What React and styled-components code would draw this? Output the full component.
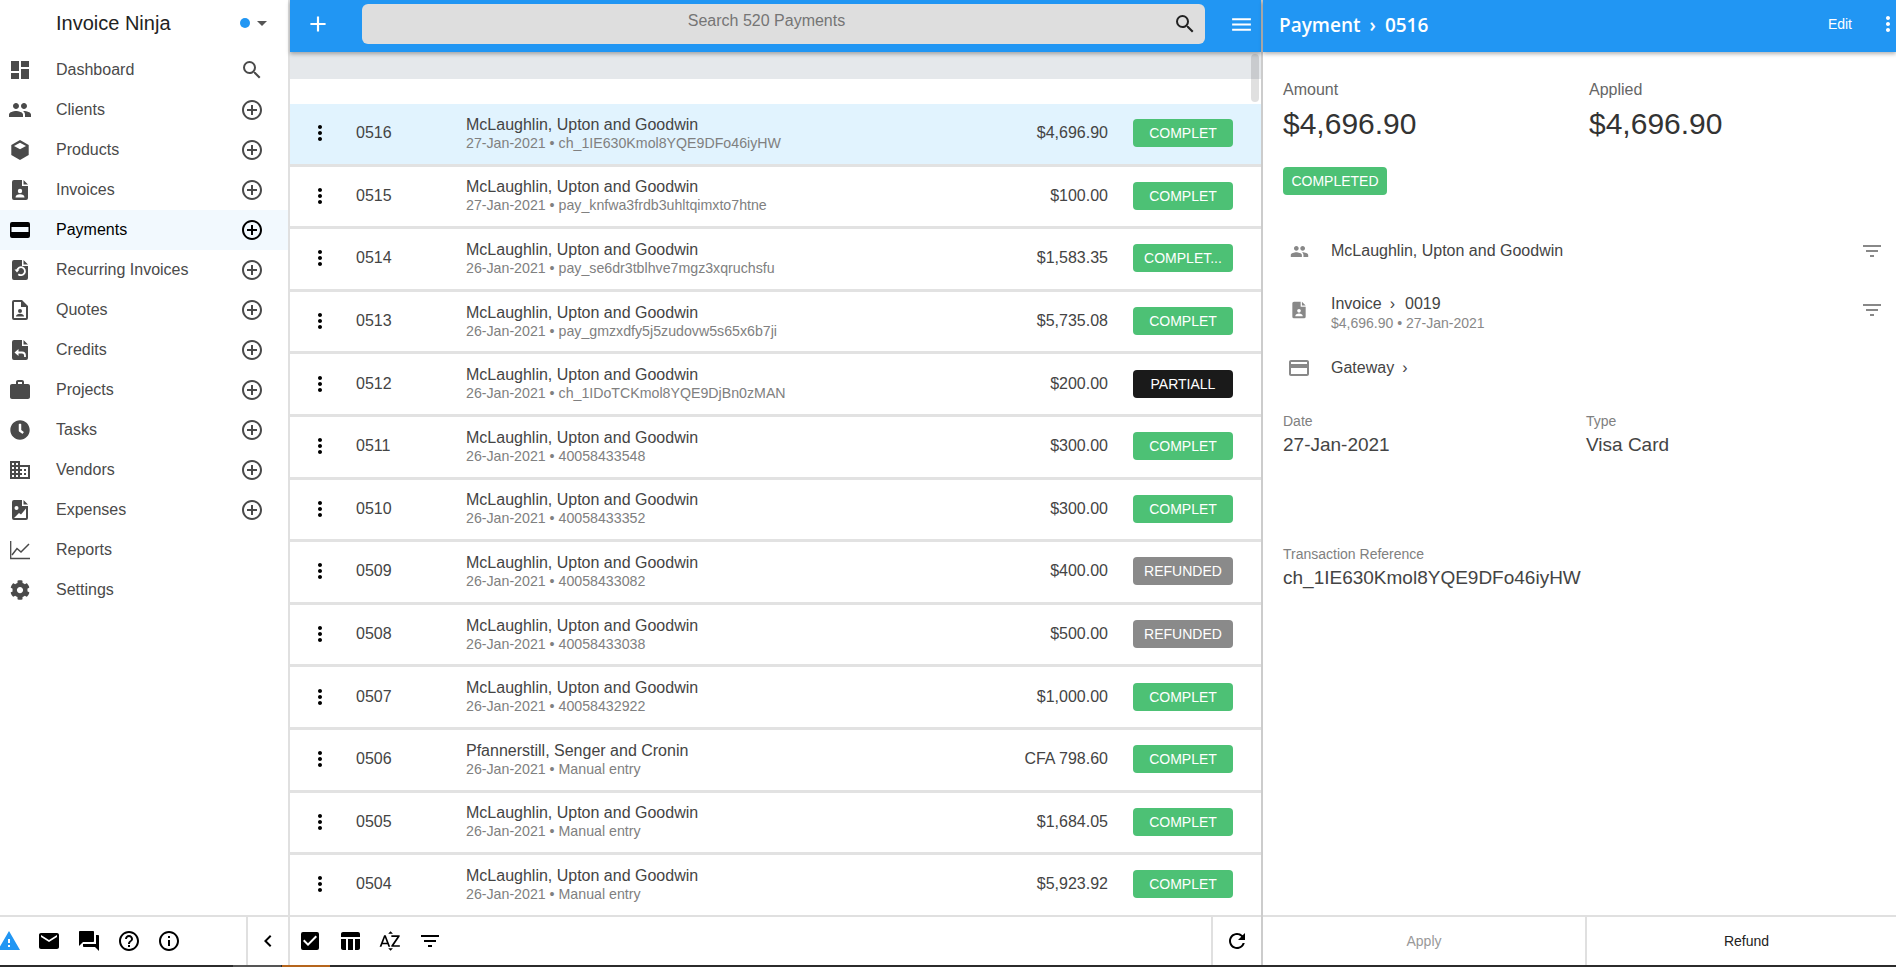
import React from "react";
import styled, { createGlobalStyle } from "styled-components";
import {
  MdDashboard, MdPeople, MdSearch, MdAddCircleOutline, MdCreditCard, MdWork, MdDomain,
  MdWarning, MdMail, MdForum, MdHelpOutline, MdInfoOutline, MdChevronLeft, MdCheckBox,
  MdTableChart, MdSortByAlpha, MdFilterList, MdRefresh, MdMoreVert, MdAdd, MdMenu,
  MdArrowDropDown,
} from "react-icons/md";
import { FaClock, FaCog } from "react-icons/fa";

const GlobalStyle = createGlobalStyle`
  html, body { margin: 0; padding: 0; height: 100%; overflow: hidden; background: #fff; }
  body { font-family: "Liberation Sans", Arial, sans-serif; }
  * { box-sizing: border-box; }
`;

// file shaped icons used by invoices, quotes, credits, expenses
const FileIcon = ({ children, outline, size = 24 }) => (
  <svg width={size} height={size} viewBox="0 0 24 24">
    <path
      fill="currentColor"
      fillRule="evenodd"
      d={outline
        ? "M6 2h8l6 6v12a2 2 0 0 1-2 2H6a2 2 0 0 1-2-2V4a2 2 0 0 1 2-2zm0 2v16h12V9h-5V4z"
        : "M6 2h8v6h6v12a2 2 0 0 1-2 2H6a2 2 0 0 1-2-2V4a2 2 0 0 1 2-2zm9.500 0L20 6.500h-4.500z"}
    />
    {children}
  </svg>
);

const InvoiceIcon = ({ size }) => (
  <FileIcon size={size}>
    <circle cx="12" cy="13" r="2.200" fill="#fff" />
    <path d="M7.500 19.500c0-2.200 2-3.300 4.500-3.300s4.500 1.100 4.500 3.300z" fill="#fff" />
  </FileIcon>
);
const RecurringIcon = () => (
  <FileIcon>
    <path d="M9 12.500a4 4 0 1 1 1.300 3.700" fill="none" stroke="#fff" strokeWidth="1.800" />
    <path d="M6.500 11.500h5l-2.500 3z" fill="#fff" />
  </FileIcon>
);
const QuoteIcon = () => (
  <FileIcon outline>
    <circle cx="12" cy="13" r="2" fill="currentColor" />
    <path d="M8 18.500c0-1.900 1.800-2.800 4-2.800s4 .9 4 2.800z" fill="currentColor" />
  </FileIcon>
);
const CreditIcon = () => (
  <FileIcon>
    <path d="M9 14.500h5a3 3 0 0 1 3 3v1.500" fill="none" stroke="#fff" strokeWidth="1.800" />
    <path d="M10.500 11v7l-4-3.500z" fill="#fff" />
  </FileIcon>
);
const ExpenseIcon = () => (
  <FileIcon>
    <circle cx="8.500" cy="10" r="2" fill="#fff" />
    <path d="M6 20l5-5 2 1.500 5-6V20z" fill="#fff" />
  </FileIcon>
);
const ProductIcon = () => (
  <svg width="24" height="24" viewBox="0 0 24 24">
    <path fill="currentColor" d="M12 2l8.700 5v10L12 22l-8.700-5V7z" />
    <path fill="#fff" d="M12 4.800L18 8l-6 3.300L6 8z" />
  </svg>
);
const CardIcon = () => (
  <svg width="24" height="24" viewBox="0 0 24 24">
    <path
      fill="currentColor"
      fillRule="evenodd"
      d="M4 4h16a2 2 0 0 1 2 2v12a2 2 0 0 1-2 2H4a2 2 0 0 1-2-2V6a2 2 0 0 1 2-2zM3.500 9v5h17V9z"
    />
  </svg>
);
const ReportIcon = () => (
  <svg width="24" height="24" viewBox="0 0 24 24">
    <path fill="none" stroke="currentColor" strokeWidth="1.300" d="M2.700 3v17.500H22" />
    <path fill="none" stroke="currentColor" strokeWidth="1.500" d="M4 17l5-6.500 4 3.500 8-8" />
  </svg>
);

const navItems = [
  { label: "Dashboard", Icon: MdDashboard, action: "search" },
  { label: "Clients", Icon: MdPeople, action: "add" },
  { label: "Products", Icon: ProductIcon, action: "add" },
  { label: "Invoices", Icon: InvoiceIcon, action: "add" },
  { label: "Payments", Icon: CardIcon, action: "add", active: true },
  { label: "Recurring Invoices", Icon: RecurringIcon, action: "add" },
  { label: "Quotes", Icon: QuoteIcon, action: "add" },
  { label: "Credits", Icon: CreditIcon, action: "add" },
  { label: "Projects", Icon: MdWork, action: "add" },
  { label: "Tasks", Icon: FaClock, small: true, action: "add" },
  { label: "Vendors", Icon: MdDomain, action: "add" },
  { label: "Expenses", Icon: ExpenseIcon, action: "add" },
  { label: "Reports", Icon: ReportIcon },
  { label: "Settings", Icon: FaCog, small: true },
];

const mcl = "McLaughlin, Upton and Goodwin";
const payments = [
  ["0516", mcl, "27-Jan-2021", "ch_1IE630Kmol8YQE9DFo46iyHW", "$4,696.90", "COMPLET", "green"],
  ["0515", mcl, "27-Jan-2021", "pay_knfwa3frdb3uhltqimxto7htne", "$100.00", "COMPLET", "green"],
  ["0514", mcl, "26-Jan-2021", "pay_se6dr3tblhve7mgz3xqruchsfu", "$1,583.35", "COMPLET...", "green"],
  ["0513", mcl, "26-Jan-2021", "pay_gmzxdfy5j5zudovw5s65x6b7ji", "$5,735.08", "COMPLET", "green"],
  ["0512", mcl, "26-Jan-2021", "ch_1IDoTCKmol8YQE9DjBn0zMAN", "$200.00", "PARTIALL", "black"],
  ["0511", mcl, "26-Jan-2021", "40058433548", "$300.00", "COMPLET", "green"],
  ["0510", mcl, "26-Jan-2021", "40058433352", "$300.00", "COMPLET", "green"],
  ["0509", mcl, "26-Jan-2021", "40058433082", "$400.00", "REFUNDED", "gray"],
  ["0508", mcl, "26-Jan-2021", "40058433038", "$500.00", "REFUNDED", "gray"],
  ["0507", mcl, "26-Jan-2021", "40058432922", "$1,000.00", "COMPLET", "green"],
  ["0506", "Pfannerstill, Senger and Cronin", "26-Jan-2021", "Manual entry", "CFA 798.60", "COMPLET", "green"],
  ["0505", mcl, "26-Jan-2021", "Manual entry", "$1,684.05", "COMPLET", "green"],
  ["0504", mcl, "26-Jan-2021", "Manual entry", "$5,923.92", "COMPLET", "green"],
];

const badgeColors = { green: "#4dc175", black: "#1a1a1a", gray: "#8a8a8a" };

const App = () => (
  <Page>
    <GlobalStyle />
    <Columns>
      <Sidebar>
        <Brand>
          <BrandName>Invoice Ninja</BrandName>
          <BrandDot />
          <BrandCaret><MdArrowDropDown size={24} /></BrandCaret>
        </Brand>
        <Nav>
          {navItems.map(({ label, Icon, small, action, active }) => (
            <NavRow key={label} $active={active}>
              <NavIcon>{small ? <Icon size={20} /> : <Icon size={24} />}</NavIcon>
              <NavLabel>{label}</NavLabel>
              {action === "search" && <NavAction><MdSearch size={24} /></NavAction>}
              {action === "add" && <NavAction><MdAddCircleOutline size={24} /></NavAction>}
            </NavRow>
          ))}
        </Nav>
        <BottomBar>
          <WarningCell><MdWarning size={24} color="#2196f3" /></WarningCell>
          <FootIcon><MdMail size={24} /></FootIcon>
          <FootIcon><MdForum size={24} /></FootIcon>
          <FootIcon><MdHelpOutline size={24} /></FootIcon>
          <FootIcon><MdInfoOutline size={24} /></FootIcon>
          <Collapse><MdChevronLeft size={24} /></Collapse>
        </BottomBar>
      </Sidebar>

      <ListPane>
        <BlueBar>
          <AddButton><MdAdd size={26} /></AddButton>
          <SearchBox>
            <SearchText>Search 520 Payments</SearchText>
            <SearchIcon><MdSearch size={24} /></SearchIcon>
          </SearchBox>
          <MenuButton><MdMenu size={25} /></MenuButton>
        </BlueBar>
        <ListBody>
          <FilterBand />
          <ListGap />
          <ScrollThumb />
          {payments.map(([num, client, date, ref, amount, status, color], i) => (
            <PaymentRow key={num} $selected={i === 0}>
              <Kebab><MdMoreVert size={24} /></Kebab>
              <PayNumber>{num}</PayNumber>
              <PayInfo>
                <PayClient>{client}</PayClient>
                <PaySub>{date} • {ref}</PaySub>
              </PayInfo>
              <PayAmount>{amount}</PayAmount>
              <StatusBadge $color={color}>{status}</StatusBadge>
            </PaymentRow>
          ))}
        </ListBody>
        <BottomBar>
          <ToolIcon><MdCheckBox size={24} /></ToolIcon>
          <ToolIcon><MdTableChart size={24} /></ToolIcon>
          <ToolIcon><MdSortByAlpha size={24} /></ToolIcon>
          <ToolIcon><MdFilterList size={24} /></ToolIcon>
          <RefreshCell><MdRefresh size={24} /></RefreshCell>
        </BottomBar>
      </ListPane>

      <DetailPane>
        <DetailBar>
          <DetailTitle>Payment<TitleSep>›</TitleSep>0516</DetailTitle>
          <EditLink>Edit</EditLink>
          <DetailKebab><MdMoreVert size={24} /></DetailKebab>
        </DetailBar>
        <DetailBody>
          <TotalsRow>
            <Total>
              <TotalLabel>Amount</TotalLabel>
              <TotalValue>$4,696.90</TotalValue>
            </Total>
            <Total>
              <TotalLabel>Applied</TotalLabel>
              <TotalValue>$4,696.90</TotalValue>
            </Total>
          </TotalsRow>
          <CompletedBadge>COMPLETED</CompletedBadge>
          <LinkRow $h={58} $top={27}>
            <LinkIcon><MdPeople size={19} /></LinkIcon>
            <LinkText><LinkTitle>{mcl}</LinkTitle></LinkText>
            <LinkFilter><MdFilterList size={24} /></LinkFilter>
          </LinkRow>
          <LinkRow $h={60}>
            <LinkIcon><InvoiceIcon size={20} /></LinkIcon>
            <LinkText $twoLines>
              <LinkTitle>Invoice<LinkSep>›</LinkSep>0019</LinkTitle>
              <LinkSub>$4,696.90 • 27-Jan-2021</LinkSub>
            </LinkText>
            <LinkFilter><MdFilterList size={24} /></LinkFilter>
          </LinkRow>
          <LinkRow $h={56}>
            <LinkIcon><MdCreditCard size={24} /></LinkIcon>
            <LinkText><LinkTitle>Gateway<LinkSep>›</LinkSep></LinkTitle></LinkText>
          </LinkRow>
          <FactsRow>
            <Fact>
              <FactLabel>Date</FactLabel>
              <FactValue>27-Jan-2021</FactValue>
            </Fact>
            <Fact>
              <FactLabel>Type</FactLabel>
              <FactValue>Visa Card</FactValue>
            </Fact>
          </FactsRow>
          <Reference>
            <FactLabel>Transaction Reference</FactLabel>
            <FactValue>ch_1IE630Kmol8YQE9DFo46iyHW</FactValue>
          </Reference>
        </DetailBody>
        <ActionBar>
          <ActionButton $disabled $w="322px">Apply</ActionButton>
          <ActionButton $w="auto">Refund</ActionButton>
        </ActionBar>
      </DetailPane>
    </Columns>
    <TaskStrip>
      <TaskItem $color="#555555" />
      <TaskItem $color="#b5651d" />
    </TaskStrip>
  </Page>
);

const Page = styled.div`
  display: flex;
  flex-direction: column;
  height: 100vh;
  overflow: hidden;
`;

const Columns = styled.div`
  display: flex;
  flex: 1;
  min-height: 0;
`;

const Sidebar = styled.aside`
  display: flex;
  flex-direction: column;
  flex: 0 0 290px;
  border-right: 2px solid #e0e0e0;
`;

const Brand = styled.div`
  display: flex;
  align-items: center;
  height: 50px;
  padding: 0 0 4px 56px;
  flex: none;
`;

const BrandName = styled.div`
  font-size: 20px;
  color: #222;
  flex: 1;
`;

const BrandDot = styled.span`
  width: 10px;
  height: 10px;
  border-radius: 50%;
  background: #2196f3;
`;

const BrandCaret = styled.span`
  display: flex;
  color: #555;
  margin: 0 14px 0 0;
`;

const Nav = styled.nav`
  flex: 1;
`;

const NavRow = styled.div`
  display: flex;
  align-items: center;
  height: 40px;
  color: ${props => props.$active ? "#000" : "#4a4a4a"};
  background: ${props => props.$active ? "#f2f9fe" : "transparent"};
`;

const NavIcon = styled.span`
  display: flex;
  justify-content: center;
  flex: 0 0 40px;
`;

const NavLabel = styled.span`
  flex: 1;
  margin-left: 16px;
  font-size: 16px;
`;

const NavAction = styled.span`
  display: flex;
  margin-right: 24px;
`;

const BottomBar = styled.div`
  display: flex;
  align-items: center;
  flex: none;
  height: 50px;
  border-top: 2px solid #e0e0e0;
  color: #000;
`;

const WarningCell = styled.span`
  display: flex;
  margin-left: -3px;
  margin-right: 8px;
`;

const FootIcon = styled.span`
  display: flex;
  width: 40px;
  justify-content: center;
`;

const Collapse = styled.span`
  display: flex;
  align-self: stretch;
  align-items: center;
  justify-content: center;
  margin-left: auto;
  width: 42px;
  border-left: 2px solid #e0e0e0;
`;

const ListPane = styled.main`
  display: flex;
  flex-direction: column;
  flex: 0 0 973px;
  min-width: 0;
  border-right: 2px solid #cccccc;
`;

const BlueBar = styled.header`
  position: relative;
  z-index: 2;
  display: flex;
  align-items: flex-start;
  flex: none;
  height: 52px;
  background: #2196f3;
  box-shadow: 0 2px 4px rgba(0, 0, 0, .3);
  color: #fff;
`;

const AddButton = styled.span`
  display: flex;
  justify-content: center;
  align-items: center;
  width: 56px;
  height: 48px;
  margin-right: 16px;
`;

const SearchBox = styled.div`
  position: relative;
  display: flex;
  justify-content: center;
  width: 843px;
  height: 40px;
  margin-top: 4px;
  padding-right: 34px;
  border-radius: 6px;
  background: #dedede;
`;

const SearchText = styled.span`
  font-size: 16px;
  line-height: 33px;
  color: #757575;
`;

const SearchIcon = styled.span`
  position: absolute;
  right: 8px;
  top: 8px;
  display: flex;
  color: #222;
`;

const MenuButton = styled.span`
  display: flex;
  justify-content: center;
  flex: 1;
  margin: 12px 0 0 16px;
`;

const ListBody = styled.div`
  position: relative;
  flex: 1;
  min-height: 0;
  overflow: hidden;
`;

const FilterBand = styled.div`
  height: 27px;
  background: #e5e8eb;
`;

const ListGap = styled.div`
  height: 25px;
`;

const ScrollThumb = styled.div`
  position: absolute;
  top: 2px;
  right: 2px;
  width: 8px;
  height: 48px;
  border-radius: 4px;
  background: rgba(0, 0, 0, .12);
`;

const PaymentRow = styled.div`
  display: flex;
  align-items: center;
  height: 62.600px;
  padding: 0 28px 1px 0;
  border-bottom: 3px solid #e2e2e2;
  background: ${props => props.$selected ? "#e1f3fe" : "#fff"};
`;

const Kebab = styled.span`
  display: flex;
  justify-content: center;
  flex: 0 0 60px;
  color: #000;
`;

const PayNumber = styled.span`
  flex: 0 0 110px;
  margin-left: 6px;
  font-size: 16px;
  color: #444;
`;

const PayInfo = styled.div`
  flex: 1;
  min-width: 0;
`;

const PayClient = styled.div`
  font-size: 16px;
  line-height: 19px;
  color: #444;
`;

const PaySub = styled.div`
  font-size: 14.200px;
  line-height: 18px;
  color: #808080;
`;

const PayAmount = styled.span`
  margin-right: 25px;
  font-size: 16px;
  color: #444;
`;

const StatusBadge = styled.span`
  flex: 0 0 100px;
  height: 28px;
  border-radius: 4px;
  font-size: 14px;
  line-height: 28px;
  text-align: center;
  color: #fff;
  background: ${props => badgeColors[props.$color]};
`;

const DetailPane = styled.section`
  display: flex;
  flex-direction: column;
  flex: 1;
  min-width: 0;
`;

const DetailBar = styled.header`
  position: relative;
  z-index: 2;
  display: flex;
  align-items: center;
  flex: none;
  height: 52px;
  padding-left: 16px;
  background: #2196f3;
  box-shadow: 0 2px 4px rgba(0, 0, 0, .3);
  color: #fff;
`;

const DetailTitle = styled.div`
  flex: 1;
  margin-bottom: 2px;
  font-family: "Open Sans", "Noto Sans", sans-serif;
  font-size: 19px;
  font-weight: 600;
`;

const TitleSep = styled.span`
  margin: 0 9px;
`;

const EditLink = styled.span`
  margin: 0 0 4px;
  font-size: 14px;
`;

const DetailKebab = styled.span`
  display: flex;
  margin: 0 -4px 4px 24px;
`;

const DetailBody = styled.div`
  flex: 1;
  min-height: 0;
  padding: 28px 20px 0;
`;

const TotalsRow = styled.div`
  display: grid;
  grid-template-columns: 306px 1fr;
`;

const Total = styled.div``;

const TotalLabel = styled.div`
  font-size: 16px;
  line-height: 20px;
  color: #666;
`;

const TotalValue = styled.div`
  margin-top: 6px;
  font-size: 30px;
  line-height: 36px;
  color: #333;
`;

const CompletedBadge = styled.div`
  margin-top: 25px;
  width: 104px;
  height: 28px;
  border-radius: 4px;
  font-size: 14px;
  line-height: 28px;
  text-align: center;
  color: #fff;
  background: #4dc175;
`;

const LinkRow = styled.div`
  display: flex;
  align-items: center;
  height: ${props => props.$h}px;
  margin-top: ${props => props.$top || 0}px;
  color: #888;
`;

const LinkIcon = styled.span`
  display: flex;
  justify-content: center;
  flex: 0 0 32px;
  margin-right: 16px;
`;

const LinkText = styled.div`
  flex: 1;
  padding-top: ${props => props.$twoLines ? "5px" : "0"};
`;

const LinkTitle = styled.div`
  font-size: 16px;
  line-height: 20px;
  color: #444;
`;

const LinkSep = styled.span`
  margin: 0 10px 0 8px;
`;

const LinkSub = styled.div`
  font-size: 14px;
  line-height: 18px;
  color: #888;
`;

const LinkFilter = styled.span`
  display: flex;
  margin-right: -8px;
`;

const FactsRow = styled.div`
  display: grid;
  grid-template-columns: 303px 1fr;
  margin-top: 16px;
`;

const Fact = styled.div``;

const FactLabel = styled.div`
  font-size: 14px;
  line-height: 18px;
  color: #808080;
`;

const FactValue = styled.div`
  margin-top: 3px;
  font-size: 19px;
  line-height: 24px;
  color: #444;
`;

const Reference = styled.div`
  margin-top: 88px;
`;

const ActionBar = styled.div`
  display: flex;
  flex: none;
  height: 50px;
  border-top: 2px solid #e0e0e0;
`;

const ActionButton = styled.span`
  flex: ${props => props.$w === "auto" ? "1" : `0 0 ${props.$w}`};
  font-size: 14px;
  line-height: 48px;
  text-align: center;
  color: ${props => props.$disabled ? "#999" : "#222"};
  & + & {
    border-left: 2px solid #e0e0e0;
    padding-left: 10px;
  }
`;

const ToolIcon = styled.span`
  display: flex;
  justify-content: center;
  width: 40px;
`;

const RefreshCell = styled.span`
  display: flex;
  align-self: stretch;
  align-items: center;
  justify-content: center;
  width: 50px;
  margin-left: auto;
  border-left: 2px solid #e0e0e0;
`;

const TaskStrip = styled.div`
  display: flex;
  gap: 1px;
  flex: none;
  height: 2px;
  padding-left: 233px;
  background: #2b2b2b;
`;

const TaskItem = styled.span`
  width: 48px;
  background: ${props => props.$color};
`;

export default App;
